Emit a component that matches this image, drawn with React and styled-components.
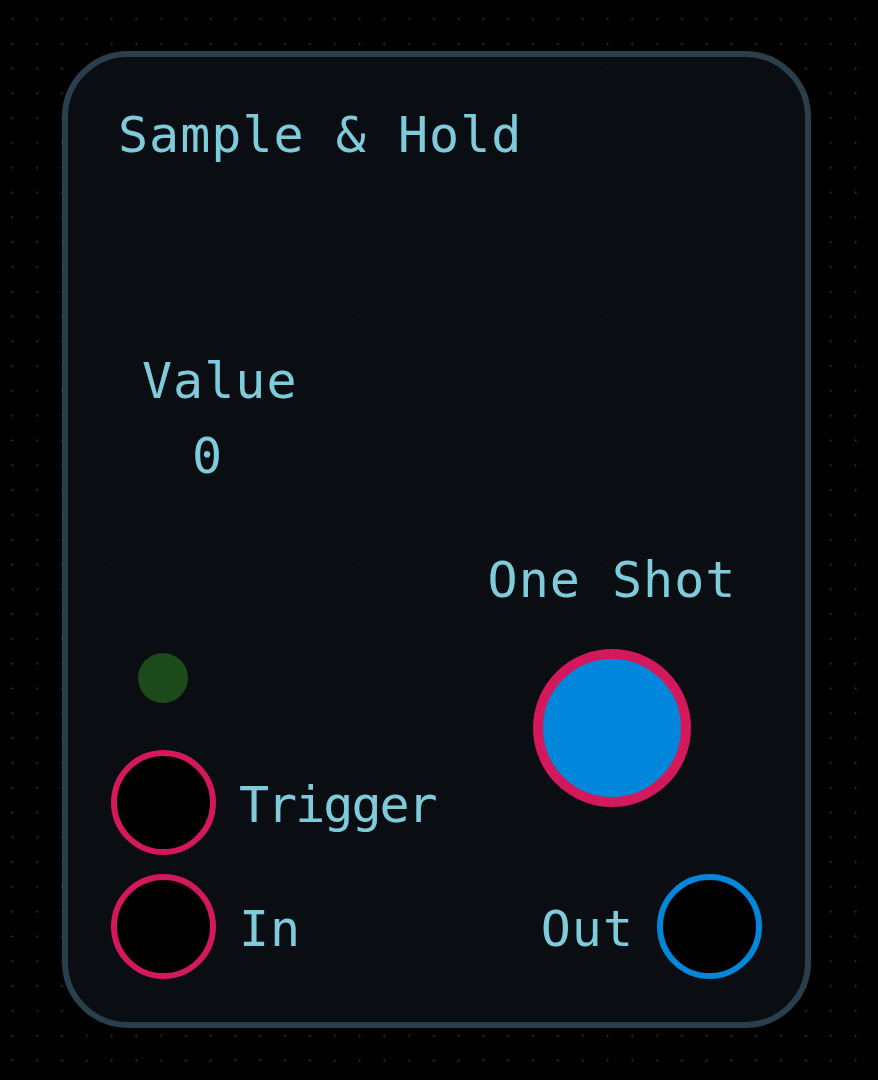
import styled, { createGlobalStyle } from "styled-components";

const GlobalStyle = createGlobalStyle`
  html, body {
    margin: 0;
    padding: 0;
    background-color: #000;
  }
  body {
    min-height: 1080px;
    background-image: radial-gradient(circle, #1a2c3a 0.9px, transparent 1.3px);
    background-size: 24.8px 24.8px;
    background-position: 0px 6.6px;
    font-family: "DejaVu Sans Mono", "Liberation Mono", monospace;
  }
  #root {
    padding-top: 51px;
    padding-left: 62px;
  }
`;

const colors = {
  text: "#7ecbdb",
  pink: "#d3185b",
  blue: "#0087dc",
};

const Card = styled.div`
  box-sizing: border-box;
  width: 749px;
  height: 977px;
  border: 6px solid #2b3e4c;
  border-radius: 66px;
  background-color: rgba(11, 15, 21, 0.88);
  padding: 53px 43px 43px 43px;
  display: flex;
  flex-direction: column;
  color: ${colors.text};
`;

const Label = styled.div`
  font-size: 50px;
  line-height: 1;
  letter-spacing: ${({ $tight }) => ($tight ? "-2px" : "1px")};
  white-space: nowrap;
`;

const Title = styled(Label)`
  margin-left: 7px;
`;

const ValueBlock = styled.div`
  margin-top: 196px;
  margin-left: 31px;
  display: flex;
  flex-direction: column;
  gap: 25px;
`;

const ValueNumber = styled(Label)`
  margin-left: 50px;
`;

const Middle = styled.div`
  margin-top: 74px;
  display: flex;
  justify-content: space-between;
  align-items: flex-end;
`;

const LeftColumn = styled.div`
  display: flex;
  flex-direction: column;
  gap: 47px;
`;

const Led = styled.div`
  width: 50px;
  height: 50px;
  margin-left: 27px;
  border-radius: 50%;
  background-color: #1d4a1b;
`;

const RightColumn = styled.div`
  width: 300px;
  display: flex;
  flex-direction: column;
  align-items: center;
  gap: 44px;
  margin-bottom: 48px;
`;

const PushButton = styled.button`
  box-sizing: border-box;
  width: 158px;
  height: 158px;
  border-radius: 50%;
  border: 10px solid ${colors.pink};
  background-color: ${colors.blue};
  padding: 0;
  cursor: pointer;
`;

const Bottom = styled.div`
  margin-top: 19px;
  display: flex;
  justify-content: space-between;
  align-items: center;
`;

const Port = styled.div`
  display: flex;
  align-items: center;
  gap: 23px;
`;

const PortLabel = styled(Label)`
  padding-top: 4px;
`;

const Jack = styled.div`
  box-sizing: border-box;
  width: 105px;
  height: 105px;
  border-radius: 50%;
  border: 6px solid ${({ $color }) => $color};
  background-color: #000;
`;

const App = () => {
  return (
    <>
      <GlobalStyle />
      <Card>
        <Title>Sample &amp; Hold</Title>
        <ValueBlock>
          <Label>Value</Label>
          <ValueNumber>0</ValueNumber>
        </ValueBlock>
        <Middle>
          <LeftColumn>
            <Led />
            <Port>
              <Jack $color={colors.pink} />
              <PortLabel $tight>Trigger</PortLabel>
            </Port>
          </LeftColumn>
          <RightColumn>
            <Label>One Shot</Label>
            <PushButton aria-label="One Shot" />
          </RightColumn>
        </Middle>
        <Bottom>
          <Port>
            <Jack $color={colors.pink} />
            <PortLabel>In</PortLabel>
          </Port>
          <Port>
            <PortLabel>Out</PortLabel>
            <Jack $color={colors.blue} />
          </Port>
        </Bottom>
      </Card>
    </>
  );
};

export default App;
